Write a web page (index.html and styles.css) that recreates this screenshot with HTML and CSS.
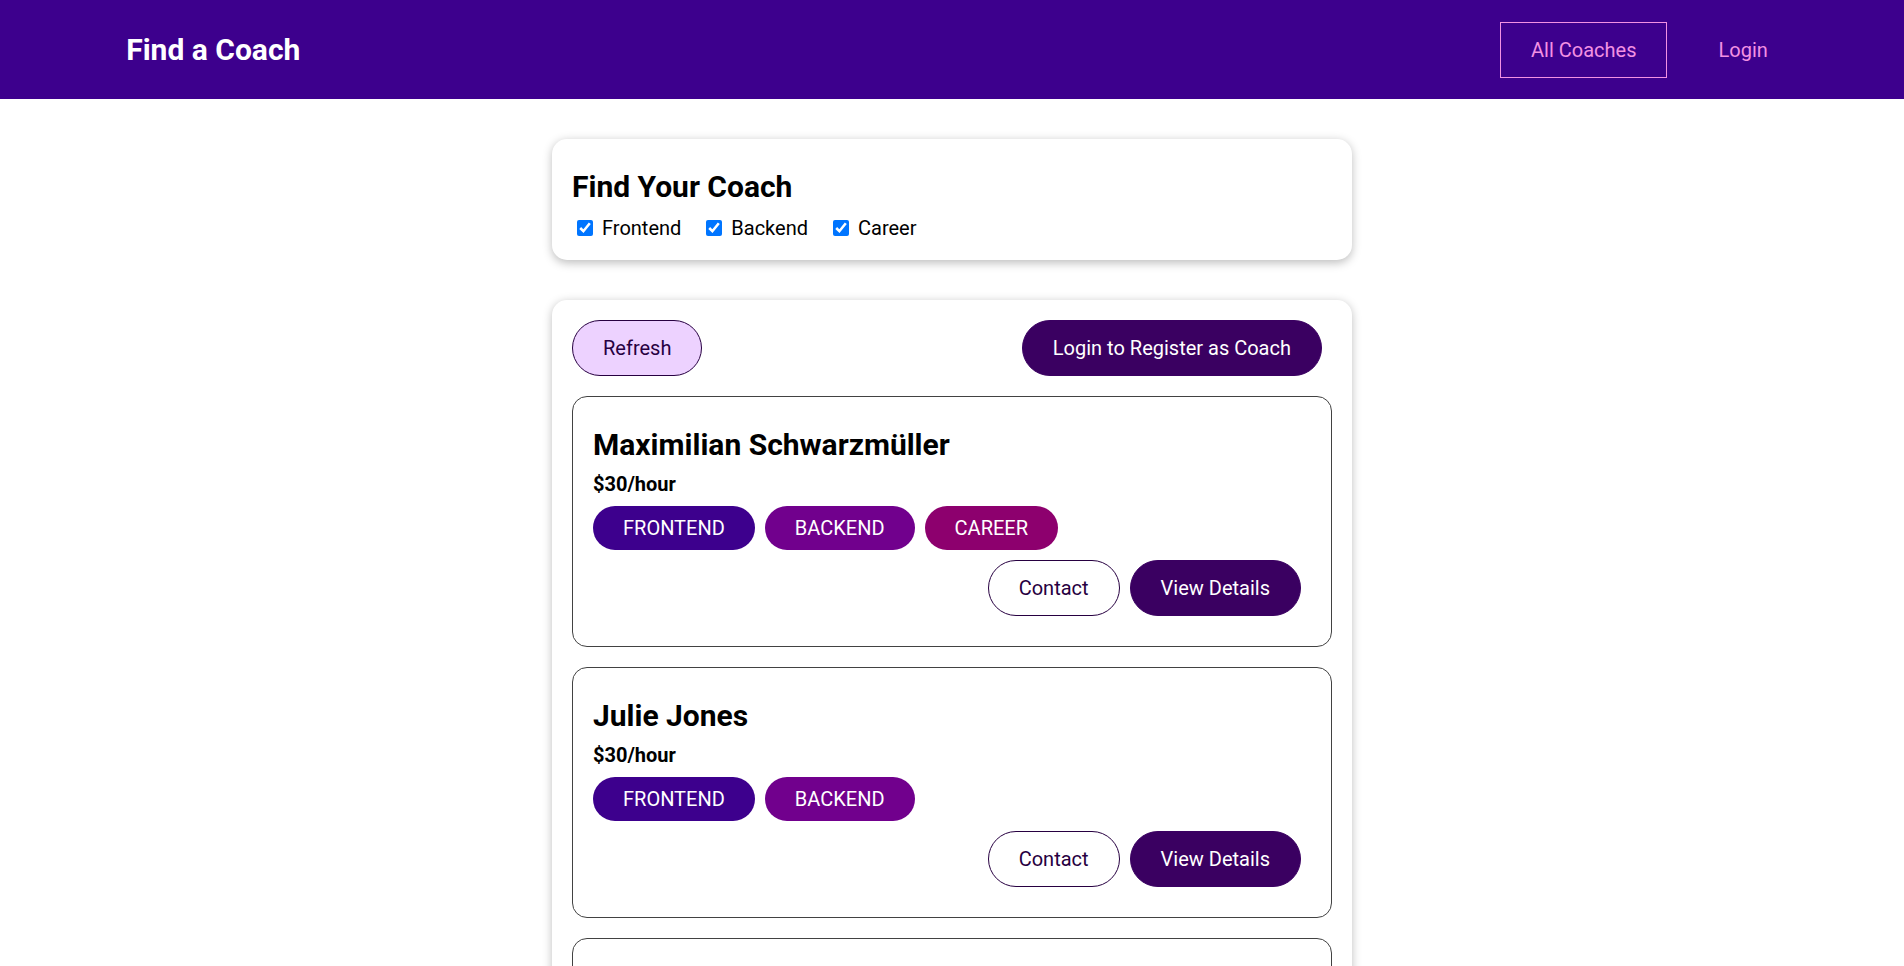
FILE: index.html
```html
<!DOCTYPE html>
<html lang="en">
<head>
<meta charset="utf-8">
<title>Find a Coach</title>
<link rel="stylesheet" href="styles.css">
</head>
<body>
<header class="site-header">
  <nav class="nav">
    <h1 class="brand"><a href="#" class="brand-link">Find a Coach</a></h1>
    <ul class="nav-list">
      <li class="nav-item"><a href="#" class="nav-link active">All Coaches</a></li>
      <li class="nav-item"><a href="#" class="nav-link">Login</a></li>
    </ul>
  </nav>
</header>
<main>
  <section class="section">
    <div class="card">
      <h2 class="filter-title">Find Your Coach</h2>
      <span class="filter-option"><input class="check" type="checkbox" id="frontend" checked><label class="filter-label" for="frontend">Frontend</label></span><span class="filter-option"><input class="check" type="checkbox" id="backend" checked><label class="filter-label" for="backend">Backend</label></span><span class="filter-option"><input class="check" type="checkbox" id="career" checked><label class="filter-label" for="career">Career</label></span>
    </div>
  </section>
  <section class="section">
    <div class="card">
      <div class="controls">
        <button class="btn btn-outline btn-hover">Refresh</button>
        <a href="#" class="btn">Login to Register as Coach</a>
      </div>
      <ul class="coach-list">
        <li class="coach">
          <h3 class="coach-name">Maximilian Schwarzmüller</h3>
          <h4 class="coach-rate">$30/hour</h4>
          <div class="badges"><span class="badge frontend">FRONTEND</span><span class="badge backend">BACKEND</span><span class="badge career">CAREER</span></div>
          <div class="actions">
            <a href="#" class="btn btn-outline">Contact</a>
            <a href="#" class="btn">View Details</a>
          </div>
        </li>
        <li class="coach">
          <h3 class="coach-name">Julie Jones</h3>
          <h4 class="coach-rate">$30/hour</h4>
          <div class="badges"><span class="badge frontend">FRONTEND</span><span class="badge backend">BACKEND</span></div>
          <div class="actions">
            <a href="#" class="btn btn-outline">Contact</a>
            <a href="#" class="btn">View Details</a>
          </div>
        </li>
        <li class="coach">
          <h3 class="coach-name">Manuel Lorenz</h3>
          <h4 class="coach-rate">$25/hour</h4>
          <div class="badges"><span class="badge career">CAREER</span></div>
          <div class="actions">
            <a href="#" class="btn btn-outline">Contact</a>
            <a href="#" class="btn">View Details</a>
          </div>
        </li>
      </ul>
    </div>
  </section>
</main>
</body>
</html>
```
FILE: styles.css
```css
* { box-sizing: border-box; }
html {
  font-family: Roboto, "Liberation Sans", sans-serif;
  font-size: 20px;
}
body { margin: 0; color: #000; background: #fff; }

.site-header {
  width: 100%;
  height: 99px;
  background-color: #3d008d;
  display: flex;
  justify-content: center;
  align-items: center;
}
.nav {
  width: 90%;
  margin: auto;
  display: flex;
  justify-content: space-between;
  align-items: center;
}
.brand {
  margin: 0;
  font-size: 30px;
  font-weight: 700;
}
.brand-link {
  color: #fff;
  text-decoration: none;
  display: inline-block;
  padding: 0.75rem 1.5rem;
  border: 1px solid transparent;
}
.nav-list {
  list-style: none;
  margin: 0;
  padding: 0;
  display: flex;
  align-items: center;
}
.nav-item { margin: 0 0.5rem; }
.nav-link {
  text-decoration: none;
  color: #f391e3;
  display: inline-block;
  padding: 0.75rem 1.5rem;
  border: 1px solid transparent;
  font-size: 20px;
}
.nav-link.active { border-color: #f391e3; }

.section { display: block; }
.card {
  border-radius: 15px;
  box-shadow: 0 2.5px 10px rgba(0, 0, 0, 0.26);
  padding: 1rem;
  margin: 2rem auto;
  max-width: 40rem;
  background: #fff;
}
.filter-title {
  margin: 0.5rem 0;
  font-size: 30px;
  font-weight: 700;
}
.filter-option { margin-right: 20px; font-size: 20px; }
.check {
  width: 16px;
  height: 16px;
  margin: 4px 4px 4px 5px;
  vertical-align: middle;
}
.filter-label { margin-left: 0.25rem; vertical-align: middle; }

.controls {
  display: flex;
  justify-content: space-between;
}
.btn {
  text-decoration: none;
  padding: 0.75rem 1.5rem;
  font: inherit;
  font-size: 20px;
  background-color: #3a0061;
  border: 1px solid #3a0061;
  color: #fff;
  border-radius: 37.5px;
  margin-right: 0.5rem;
  display: inline-block;
  line-height: normal;
}
.btn-outline {
  background-color: transparent;
  border-color: #270041;
  color: #270041;
}
.btn-hover { background-color: #edd2ff; }

.coach-list { list-style: none; margin: 0; padding: 0; }
.coach {
  margin: 1rem 0;
  border: 1px solid #424242;
  border-radius: 15px;
  padding: 1rem;
}
.coach-name { font-size: 1.5rem; margin: 0.5rem 0; font-weight: 700; }
.coach-rate { font-size: 20px; margin: 0.5rem 0; font-weight: 700; }
.badges, .actions { margin: 0.5rem 0; }
.actions { display: flex; justify-content: flex-end; }
.badge {
  border-radius: 37.5px;
  padding: 0.5rem 1.5rem;
  display: inline-block;
  margin-right: 0.5rem;
  color: #fff;
  font-size: 20px;
}
.frontend { background-color: #3d008d; }
.backend { background-color: #71008d; }
.career { background-color: #8d006e; }
```
